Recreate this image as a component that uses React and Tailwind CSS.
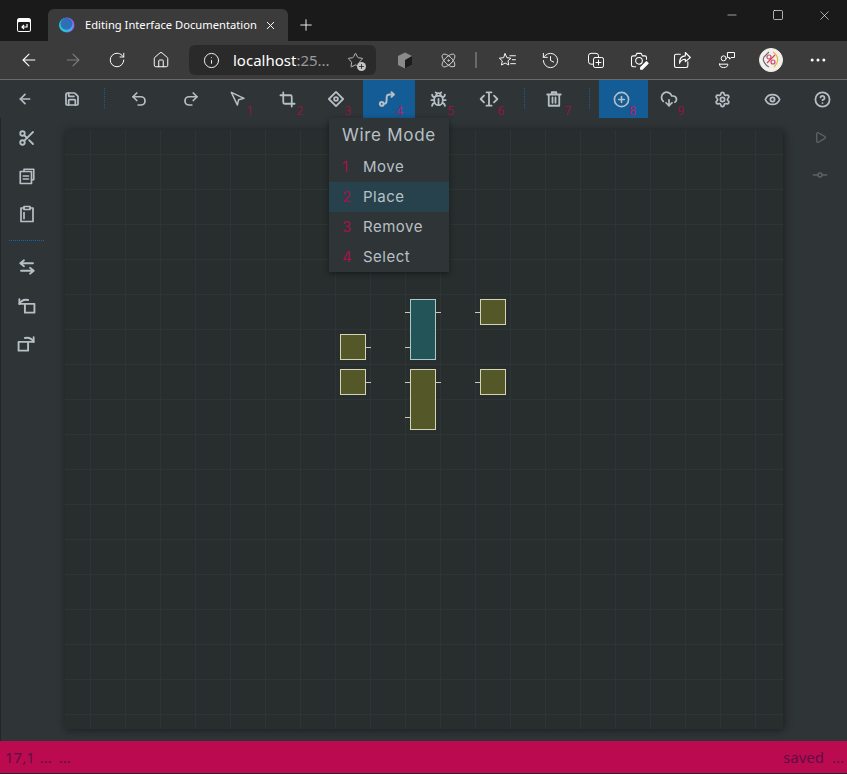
import React from "react";
import { ArrowLeft, ArrowRight, RotateCw, House, Info, Star, X, Plus, Minus, Square, Atom, History, MoreHorizontal, Save, Undo2, Redo2, Navigation, Crop, Bug, CirclePlus, CloudDownload, Settings, Eye, CircleHelp, Scissors, Play } from "lucide-react";

const S = ({ size = 20, children, className = "", sw = 1.5 }) => (
  <svg width={size} height={size} viewBox="0 0 24 24" fill="none" stroke="currentColor" strokeWidth={sw} strokeLinecap="round" strokeLinejoin="round" className={className}>{children}</svg>
);

const DiamondDot = () => <S size={18} sw={2.4}><path d="M12 2.500 21.500 12 12 21.500 2.500 12Z" /><circle cx="12" cy="12" r="2.500" /></S>;
const Wire = () => <S size={18} sw={2.6}><circle cx="5" cy="18.500" r="2.500" /><path d="M7.500 18.500c3.500 0 4-1.500 4-6.500s.5-6 4.500-6h5" /><path d="m18 3 3 3-3 3" /></S>;
const TextIO = () => <S size={20} sw={2.200}><path d="M12 4v16M9 4h6M9 20h6" /><path d="M6 8l-4 4 4 4M18 8l4 4-4 4" /></S>;
const Node = () => <S size={16} sw={2.200}><circle cx="12" cy="12" r="3" /><path d="M2 12h7M15 12h7" /></S>;
const SwapL = () => <S size={18} sw={2.400}><path d="M3 7h17M8 3 3 7l5 4" /><path d="M21 17H4M16 13l5 4-5 4" /></S>;
const RotL = ({ className = "" }) => <S size={19} sw={2.400} className={className}><rect x="10" y="10" width="12" height="11" /><path d="M3 10c2-4 6-6 11-5" /><path d="M3 4v6h6" /></S>;
const Trash = () => <S size={18} sw={2.400}><path d="M3 6h18M9 6V3h6v3M5 6v15h14V6M10 10v7M14 10v7" /></S>;
const CopyDoc = () => <S size={18} sw={2.200}><path d="M8 6V3h13v14h-3" /><rect x="3" y="6" width="15" height="16" /><path d="M7 12h7M7 16h7" /></S>;
const ClipB = () => <S size={18} sw={2.300}><path d="M8 4H4v18h16V4h-4" /><rect x="8" y="2" width="8" height="4" /><path d="M8 10v8" /></S>;

const tools = [
  { w: "w-[47px]", icon: <ArrowLeft size={16} strokeWidth={2.500} /> },
  { w: "w-[47px]", icon: <Save size={16} strokeWidth={2.600} /> },
  { sep: true, w: "w-[18px]" },
  { w: "w-[51px]", icon: <Undo2 size={18} strokeWidth={2.300} /> },
  { w: "w-[53px]", icon: <Redo2 size={18} strokeWidth={2.300} /> },
  { w: "w-[48px]", n: 1, shift: "pr-[6px]", icon: <Navigation size={16} strokeWidth={2.300} className="-rotate-90" /> },
  { w: "w-[50px]", n: 2, shift: "pr-[6px]", icon: <Crop size={17} strokeWidth={2.500} /> },
  { w: "w-[48px]", n: 3, shift: "pr-[6px]", icon: <DiamondDot /> },
  { w: "w-[52px]", n: 4, active: true, shift: "pr-[4px]", icon: <Wire /> },
  { w: "w-[51px]", n: 5, shift: "pr-[5px]", icon: <Bug size={17} strokeWidth={2.500} /> },
  { w: "w-[50px]", n: 6, shift: "pr-[5px]", icon: <TextIO /> },
  { sep: true, w: "w-[16px]" },
  { w: "w-[48px]", n: 7, pos: "right-[9px]", shift: "pr-[4px]", icon: <Trash /> },
  { sep: true, w: "w-[19px]" },
  { w: "w-[49px]", n: 8, active: true, shift: "pr-[5px]", icon: <CirclePlus size={17} strokeWidth={2.300} /> },
  { w: "w-[48px]", n: 9, shift: "pr-[6px]", icon: <CloudDownload size={18} strokeWidth={2.300} /> },
  { w: "w-[51px]", shift: "pl-[1px]", icon: <Settings size={17} strokeWidth={2.500} /> },
  { w: "w-[50px]", shift: "pl-[1px]", icon: <Eye size={17} strokeWidth={2.500} /> },
  { w: "w-[49px]", shift: "pl-[1px]", icon: <CircleHelp size={17} strokeWidth={2.500} /> },
];

const Nodes = [
  "left-[345px] top-[169px] w-[26px] h-[61px] bg-[#235558] border-[#a9c9c8]",
  "left-[275px] top-[204px] w-[26px] h-[26px] bg-[#545828] border-[#d3d4b4]",
  "left-[275px] top-[239px] w-[26px] h-[26px] bg-[#545828] border-[#d3d4b4]",
  "left-[345px] top-[239px] w-[26px] h-[61px] bg-[#545828] border-[#d3d4b4]",
  "left-[415px] top-[169px] w-[26px] h-[26px] bg-[#545828] border-[#d3d4b4]",
  "left-[415px] top-[239px] w-[26px] h-[26px] bg-[#545828] border-[#d3d4b4]",
];
const Stubs = [
  "left-[340px] top-[182px]", "left-[371px] top-[182px]", "left-[340px] top-[217px]",
  "left-[301px] top-[217px]", "left-[301px] top-[252px]", "left-[340px] top-[252px]",
  "left-[371px] top-[252px]", "left-[340px] top-[287px]", "left-[410px] top-[182px]", "left-[410px] top-[252px]",
];

const menu = [["1", "Move"], ["2", "Place"], ["3", "Remove"], ["4", "Select"]];

export default function App() {
  return (
    <div className="relative w-[847px] h-[774px] overflow-hidden flex flex-col bg-[#2f3436] font-['Inter',sans-serif]">
      {/* title bar */}
      <div className="h-[41px] shrink-0 bg-[#1a1a1a] flex items-end text-white">
        <div className="w-[48px] h-[32px] flex items-center justify-center">
          <svg width="16" height="16" viewBox="0 0 16 16"><rect x="1" y="1" width="14" height="14" rx="2.500" fill="#fff" /><rect x="2" y="5" width="12" height="9" rx="1" fill="#1a1a1a" /><path d="M11 7v3H6M8 8l-2 2 2 2" fill="none" stroke="#fff" strokeWidth="1.200" /></svg>
        </div>
        <div className="w-[240px] h-[32px] bg-[#3b3b3b] rounded-t-md flex items-center pl-[11px] font-['Noto_Sans',sans-serif]">
          <svg width="16" height="16" viewBox="0 0 16 16" className="shrink-0"><circle cx="8" cy="8" r="7.500" fill="#a855f7" /><circle cx="7" cy="8" r="7" fill="#22c5d8" /><circle cx="7.500" cy="6.800" r="6" fill="#2f6fb8" /></svg>
          <span className="ml-[10px] text-[11.2px] whitespace-nowrap w-[172px] shrink-0">Editing Interface Documentation</span>
          <X size={13} strokeWidth={1.800} className="ml-[7px] shrink-0" />
        </div>
        <div className="w-[36px] h-[32px] flex items-center justify-center"><Plus size={18} strokeWidth={1.200} /></div>
        <div className="flex-1" />
        <div className="h-[41px] flex items-start">
          <div className="w-[46px] h-[30px] flex items-center justify-center"><Minus size={14} strokeWidth={1} /></div>
          <div className="w-[46px] h-[30px] flex items-center justify-center"><Square size={12} strokeWidth={1.300} /></div>
          <div className="w-[46px] h-[30px] flex items-center justify-center"><X size={15} strokeWidth={1} /></div>
        </div>
      </div>
      {/* browser nav */}
      <div className="h-[39px] shrink-0 bg-[#3b3b3b] border-b border-[#6a6a6a] flex items-center text-white">
        <div className="w-[58px] flex justify-center"><ArrowLeft size={20} strokeWidth={1.300} /></div>
        <div className="w-[30px] flex justify-center text-[#7f7f7f]"><ArrowRight size={20} strokeWidth={1.300} /></div>
        <div className="w-[58px] flex justify-center"><RotateCw size={18} strokeWidth={1.300} /></div>
        <div className="w-[30px] flex justify-center"><House size={18} strokeWidth={1.300} /></div>
        <div className="ml-[13px] w-[187px] h-[30px] rounded-md bg-[#2a2a2a] flex items-center pl-[14px] font-['Noto_Sans',sans-serif]">
          <Info size={17} strokeWidth={1.300} />
          <span className="ml-[13px] text-[15px] whitespace-nowrap">localhost<span className="text-[#9a9a9a]">:25...</span></span>
          <span className="relative ml-[17px] text-[#c4c4c4]">
            <Star size={17} strokeWidth={1.300} />
            <span className="absolute -right-[2px] -bottom-[2px] w-[9px] h-[9px] rounded-full bg-[#c4c4c4] flex items-center justify-center text-[#2a2a2a]"><Plus size={7} strokeWidth={3} /></span>
          </span>
        </div>
        <div className="ml-[20px] w-[18px] h-[18px] flex items-center justify-center">
          <svg width="16" height="17" viewBox="0 0 16 17"><path d="M8 .5 15 4v9l-7 3.500L1 13V4Z" fill="#8a8a8a" /><path d="M8 8v8.500L15 13V4Z" fill="#1d1d1d" /></svg>
        </div>
        <div className="ml-[25px] w-[18px] flex justify-center text-[#d4d4d4]"><Atom size={17} strokeWidth={1.400} /></div>
        <div className="ml-[18px] w-[2px] h-[16px] bg-[#6a6a6a]" />
        <div className="ml-[20px] w-[20px] flex justify-center"><S size={19} sw={1.200}><path d="M9 3.500 11.300 8.500l5 .6-3.700 3.400 1 5.200L9 15.200l-4.600 2.500 1-5.200L1.700 9.100l5-.6Z" /><path d="M15 6h7M18 11h4M16 16h6" /></S></div>
        <div className="ml-[23px] w-[20px] flex justify-center"><History size={19} strokeWidth={1.200} /></div>
        <div className="ml-[26px] w-[20px] flex justify-center"><S size={20} sw={1.200}><path d="M8 17H6a3 3 0 0 1-3-3V7a3 3 0 0 1 3-3h6a3 3 0 0 1 3 3v1" /><rect x="9" y="9" width="12" height="12" rx="2" /><path d="M15 12v6M12 15h6" /></S></div>
        <div className="ml-[23px] w-[20px] flex justify-center"><S size={20} sw={1.300}><path d="M8 20H5a2 2 0 0 1-2-2V9a2 2 0 0 1 2-2h3l1.500-3h5L16 7h3a2 2 0 0 1 2 2v2" /><circle cx="12" cy="13" r="4" /><path d="m14 21 7-7 2 2-7 7h-2Z" fill="#fff" /></S></div>
        <div className="ml-[23px] w-[20px] flex justify-center"><S size={20} sw={1.300}><path d="M10 5H5a2 2 0 0 0-2 2v12a2 2 0 0 0 2 2h12a2 2 0 0 0 2-2v-5" /><path d="m16 3 6 6-6 5v-3c-4 0-6 2-7 5 0-6 3-9 7-9Z" /></S></div>
        <div className="ml-[25px] w-[20px] flex justify-center"><S size={22} sw={1.200}><circle cx="8" cy="10" r="3" /><path d="M3 17h10c0 3-2 4-5 4s-5-1-5-4Z" /><path d="M13 3h8v6h-4l-2 2V9h-2Z" /></S></div>
        <div className="ml-[22px] w-[24px] h-[24px] rounded-full bg-[#f2f0e6] border border-[#eee] flex items-center justify-center">
          <svg width="20" height="20" viewBox="0 0 20 20" fill="none" strokeWidth="1.200"><path d="M8 2 3 7c-2 3 1 8 5 10" stroke="#6b6f8f" /><path d="M12 2c6 4 6 10 1 15" stroke="#e5b04a" /><path d="m6 13 8-8" stroke="#d2476a" /><circle cx="8" cy="7" r="2" stroke="#d2476a" /><circle cx="12" cy="12" r="2" stroke="#d2476a" /></svg>
        </div>
        <div className="ml-[25px] w-[20px] flex justify-center"><MoreHorizontal size={20} strokeWidth={1.600} /></div>
      </div>
      {/* app toolbar */}
      <div className="h-[38px] shrink-0 flex items-stretch pl-[1px] text-[#b7bfc6]">
        {tools.map((t, i) =>
          t.sep ? (
            <div key={i} className={`${t.w} flex items-center justify-center`}>
              <div className="h-[22px] w-[1px] bg-[repeating-linear-gradient(to_bottom,#1a5a90_0_1px,transparent_1px_2px)]" />
            </div>
          ) : (
            <div key={i} className={`relative ${t.w} flex items-center justify-center ${t.shift || ""} ${t.active ? "bg-[#135c96]" : ""}`}>
              {t.icon}
              {t.n && <span className={`absolute ${t.pos || "right-[12px]"} bottom-[0px] text-[12px] leading-[14px] font-['Noto_Sans',sans-serif] ${t.active ? "text-[#b81c66]" : "text-[#8f1641]"}`}>{t.n}</span>}
            </div>
          )
        )}
      </div>
      {/* main */}
      <div className="flex-1 flex min-h-0 border-l border-[#232628]">
        <div className="w-[64px] shrink-0 flex flex-col items-center pr-[13px] pt-[1px] text-[#b7bfc6]">
          <div className="h-[38px] flex items-center"><Scissors size={18} strokeWidth={2.400} /></div>
          <div className="h-[38px] flex items-center"><CopyDoc /></div>
          <div className="h-[38px] flex items-center"><ClipB /></div>
          <div className="my-[7px] w-[36px] h-[1px] bg-[repeating-linear-gradient(to_right,#1464b4_0_1px,transparent_1px_2px)]" />
          <div className="h-[38px] flex items-center"><SwapL /></div>
          <div className="h-[38px] flex items-center"><RotL /></div>
          <div className="h-[38px] flex items-center"><RotL className="scale-x-[-1]" /></div>
        </div>
        <div className="pt-[12px] pb-[12px] flex-1 min-w-0 flex">
          <div className="relative w-[718px] h-[599px] bg-[#282e2e] shadow-[1px_1px_8px_rgba(0,0,0,0.45)] bg-[linear-gradient(to_right,#2f3537_1px,transparent_1px),linear-gradient(to_bottom,#2f3537_1px,transparent_1px)] bg-[size:35px_35px] bg-[position:25px_24px]">
            {Nodes.map((c, i) => <div key={i} className={`absolute border box-border ${c}`} />)}
            {Stubs.map((c, i) => <div key={i} className={`absolute w-[5px] h-[1px] bg-[#c9cabd] ${c}`} />)}
          </div>
          <div className="flex-1 flex flex-col items-center pl-[10px] text-[#5d6366]">
            <div className="h-[38px] flex items-center -mt-[12px]"><Play size={13} strokeWidth={2.400} /></div>
            <div className="h-[38px] flex items-center"><Node /></div>
          </div>
        </div>
      </div>
      {/* status */}
      <div className="h-[33px] shrink-0 bg-[#bb0a50] border-b border-[#23272a] flex items-center text-[#5b1143] text-[15px] font-['Noto_Sans',sans-serif] pl-[5px] pr-[3px]">
        <span>17,1</span>
        <span className="ml-[5px]">...</span>
        <span className="ml-[7px]">...</span>
        <span className="ml-auto">saved</span>
        <span className="ml-[8px]">...</span>
      </div>
      {/* wire mode menu */}
      <div className="absolute left-[329px] top-[118px] w-[120px] h-[154px] bg-[#2f3436] shadow-[0_2px_6px_rgba(0,0,0,0.45)] text-[#b7c0c6]">
        <div className="h-[34px] pl-[13px] pt-[1px] flex items-center text-[17px] tracking-[0.7px] whitespace-nowrap">Wire Mode</div>
        {menu.map(([n, l]) => (
          <div key={n} className={`h-[30px] flex items-center pl-[13px] text-[15px] ${l === "Place" ? "bg-[#27424c]" : ""}`}>
            <span className="w-[21px] shrink-0 text-[#a3134b]">{n}</span>
            <span className="tracking-[0.5px]">{l}</span>
          </div>
        ))}
      </div>
    </div>
  );
}
